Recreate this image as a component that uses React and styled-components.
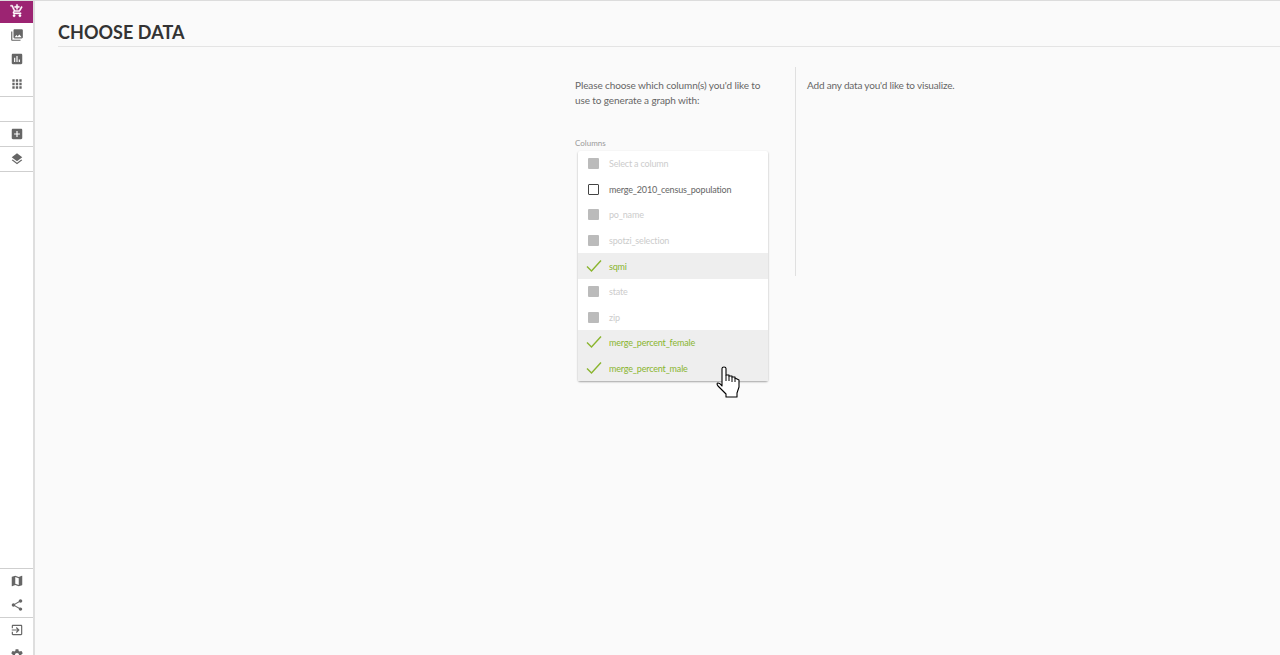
import React from 'react';
import styled, { createGlobalStyle } from 'styled-components';

const Global = createGlobalStyle`
  html, body { margin: 0; padding: 0; height: 100%; overflow: hidden; background: #fafafa; }
  #root { height: 100%; }
  * { box-sizing: border-box; }
`;
const Page = styled.div`
  display: flex; height: 655px; overflow: hidden; border-top: 1px solid #dcdcdc;
  font-family: Lato, "Open Sans", sans-serif; background: #fafafa;
`;
const Sidebar = styled.nav`
  width: 35px; flex: none; background: #fff; border-right: 2px solid #dedede;
  display: flex; flex-direction: column; justify-content: space-between; margin-top: -1px; height: 656px; overflow: hidden;
`;
const Section = styled.div`
  display: flex; flex-direction: column; border-bottom: ${p => p.$open ? 'none' : '1px solid #cfcfcf'};
  border-top: ${p => p.$top ? '1px solid #cfcfcf' : 'none'};
  height: ${p => p.$h || 'auto'};
`;
const NavItem = styled.div`
  height: ${p => p.$h || 25}px; display: flex; align-items: center; justify-content: center;
  background: ${p => p.$active ? '#9c2472' : 'transparent'};
  color: ${p => p.$active ? '#fff' : '#666'};
  svg { width: 14px; height: 14px; fill: currentColor; display: block; stroke: currentColor; stroke-width: ${p => p.$active ? '.8px' : '0'}; }
`;
const Main = styled.main`flex: 1; min-width: 0; padding-left: 23px;`;
const Header = styled.header`
  height: 46px; border-bottom: 1px solid #e4e4e4; padding-top: 19px;
`;
const Title = styled.h1`
  margin: 0; font-size: 18px; line-height: 24px; font-weight: 700; color: #333; letter-spacing: .05px;
`;
const Columns = styled.div`
  display: flex; padding: 20px 0 0 517px; align-items: flex-start;
`;
const Left = styled.section`
  width: 221px; height: 209px; border-right: 1px solid #e0e0e0; position: relative;
`;
const Intro = styled.p`
  margin: 11px 0 0; width: 200px; font-size: 10px; letter-spacing: -.1px; line-height: 15px; color: #666;
`;
const Right = styled.p`
  margin: 11px 0 0 11px; font-size: 10px; letter-spacing: -.18px; line-height: 15px; color: #666;
`;
const FieldLabel = styled.label`
  display: block; margin-top: 29px; font-size: 8px; line-height: 12px; color: #999;
`;
const Menu = styled.ul`
  position: absolute; top: 84px; left: 3px; width: 190px; margin: 0; padding: 0; list-style: none;
  background: #fff; border-radius: 2px; box-shadow: 0 1px 2px rgba(0,0,0,.35); z-index: 2;
`;
const Option = styled.li`
  height: 25.6px; display: flex; align-items: center; padding-left: 10px; font-size: 9px; letter-spacing: -.17px;
  background: ${p => p.$state === 'on' ? '#eeeeee' : 'transparent'};
  color: ${p => ({ on: '#8ab52e', off: '#ccc', open: '#666' }[p.$state])};
`;
const Mark = styled.span`
  width: 11px; height: 11px; margin-right: 10px; flex: none; display: block;
  background: ${p => p.$state === 'off' ? '#bbb' : 'transparent'};
  border: ${p => p.$state === 'open' ? '1.5px solid #444' : 'none'};
  border-radius: 1px;
  svg { display: block; width: 16px; height: 14px; margin: -2px 0 0 -2px; overflow: visible; }
`;
const Cursor = styled.svg`
  position: absolute; left: 716px; top: 366px; width: 25px; height: 32px; z-index: 5;
`;

const cart = "M11 9h2V6h3V4h-3V1h-2v3H8v2h3v3zm-4 9c-1.1 0-1.99.9-1.99 2S5.9 22 7 22s2-.9 2-2-.9-2-2-2zm10 0c-1.1 0-1.99.9-1.99 2s.89 2 1.99 2 2-.9 2-2-.9-2-2-2zm-9.83-3.25l.03-.12.9-1.63h7.45c.75 0 1.41-.41 1.75-1.03l3.86-7.01L19.42 4h-.01l-1.1 2-2.76 5H8.53l-.13-.27L6.16 6l-.95-2-.94-2H1v2h2l3.6 7.59-1.35 2.45c-.16.28-.25.61-.25.96 0 1.1.9 2 2 2h12v-2H7.42c-.13 0-.25-.11-.25-.25z";
const library = "M22 16V4c0-1.1-.9-2-2-2H8c-1.1 0-2 .9-2 2v12c0 1.1.9 2 2 2h12c1.1 0 2-.9 2-2zm-11-4l2.03 2.71L16 11l4 5H8l3-4zM2 6v14c0 1.1.9 2 2 2h14v-2H4V6H2z";
const chart = "M19 3H5c-1.1 0-2 .9-2 2v14c0 1.1.9 2 2 2h14c1.1 0 2-.9 2-2V5c0-1.1-.9-2-2-2zM9 17H7v-7h2v7zm4 0h-2V7h2v10zm4 0h-2v-4h2v4z";
const apps = "M4 8h4V4H4v4zm6 12h4v-4h-4v4zm-6 0h4v-4H4v4zm0-6h4v-4H4v4zm6 0h4v-4h-4v4zm6-10v4h4V4h-4zm-6 4h4V4h-4v4zm6 6h4v-4h-4v4zm0 6h4v-4h-4v4z";
const add = "M19 3H5c-1.11 0-2 .9-2 2v14c0 1.1.89 2 2 2h14c1.1 0 2-.9 2-2V5c0-1.1-.9-2-2-2zm-2 10h-4v4h-2v-4H7v-2h4V7h2v4h4v2z";
const layers = "M11.99 18.54l-7.37-5.73L3 14.07l9 7 9-7-1.63-1.27-7.38 5.74zM12 16l7.36-5.73L21 9l-9-7-9 7 1.63 1.27L12 16z";
const map = "M20.5 3l-.16.03L15 5.1 9 3 3.36 4.9c-.21.07-.36.25-.36.48V20.5c0 .28.22.5.5.5l.16-.03L9 18.9l6 2.1 5.64-1.9c.21-.07.36-.25.36-.48V3.5c0-.28-.22-.5-.5-.5zM15 19l-6-2.11V5l6 2.11V19z";
const share = "M18 16.08c-.76 0-1.44.3-1.96.77L8.91 12.7c.05-.23.09-.46.09-.7s-.04-.47-.09-.7l7.05-4.11c.54.5 1.25.81 2.04.81 1.66 0 3-1.34 3-3s-1.34-3-3-3-3 1.34-3 3c0 .24.04.47.09.7L8.04 9.81C7.5 9.31 6.79 9 6 9c-1.66 0-3 1.34-3 3s1.34 3 3 3c.79 0 1.5-.31 2.04-.81l7.12 4.16c-.05.21-.08.43-.08.65 0 1.61 1.31 2.92 2.92 2.92s2.92-1.31 2.92-2.92-1.31-2.92-2.92-2.92z";
const exit = "M10.09 15.59L11.5 17l5-5-5-5-1.41 1.41L12.67 11H3v2h9.67l-2.58 2.59zM19 3H5c-1.11 0-2 .9-2 2v4h2V5h14v14H5v-4H3v4c0 1.1.89 2 2 2h14c1.1 0 2-.9 2-2V5c0-1.1-.9-2-2-2z";
const gear = "M19.43 12.98c.04-.32.07-.64.07-.98s-.03-.66-.07-.98l2.11-1.65c.19-.15.24-.42.12-.64l-2-3.46c-.12-.22-.39-.3-.61-.22l-2.49 1c-.52-.4-1.08-.73-1.69-.98l-.38-2.65C14.46 2.18 14.25 2 14 2h-4c-.25 0-.46.18-.49.42l-.38 2.65c-.61.25-1.17.59-1.69.98l-2.49-1c-.23-.09-.49 0-.61.22l-2 3.46c-.13.22-.07.49.12.64l2.11 1.65c-.04.32-.07.65-.07.98s.03.66.07.98l-2.11 1.65c-.19.15-.24.42-.12.64l2 3.46c.12.22.39.3.61.22l2.49-1c.52.4 1.08.73 1.69.98l.38 2.65c.03.24.24.42.49.42h4c.25 0 .46-.18.49-.42l.38-2.65c.61-.25 1.17-.59 1.69-.98l2.49 1c.23.09.49 0 .61-.22l2-3.46c.12-.22.07-.49-.12-.64l-2.11-1.65zM12 15.5c-1.93 0-3.5-1.57-3.5-3.5s1.57-3.5 3.5-3.5 3.5 1.57 3.5 3.5-1.57 3.5-3.5 3.5z";

const Icon = ({ d }) => <svg viewBox="0 0 24 24"><path d={d} /></svg>;
const options = [
  ['Select a column', 'off'], ['merge_2010_census_population', 'open'], ['po_name', 'off'],
  ['spotzi_selection', 'off'], ['sqmi', 'on'], ['state', 'off'], ['zip', 'off'],
  ['merge_percent_female', 'on'], ['merge_percent_male', 'on'],
];

export default function App() {
  return (
    <Page>
      <Global />
      <Sidebar>
        <div>
          <Section $h="97px">
            <NavItem $active $h={23}><Icon d={cart} /></NavItem>
            <NavItem><Icon d={library} /></NavItem>
            <NavItem><Icon d={chart} /></NavItem>
            <NavItem><Icon d={apps} /></NavItem>
          </Section>
          <Section $h="25px" />
          <Section $h="25px"><NavItem $h={23}><Icon d={add} /></NavItem></Section>
          <Section $h="25px"><NavItem $h={24}><Icon d={layers} /></NavItem></Section>
        </div>
        <div style={{ height: 88 }}>
          <Section $top $h="50px">
            <NavItem $h={24}><Icon d={map} /></NavItem>
            <NavItem $h={24}><Icon d={share} /></NavItem>
          </Section>
          <Section $open>
            <NavItem $h={24}><Icon d={exit} /></NavItem>
            <NavItem $h={25}><Icon d={gear} /></NavItem>
          </Section>
        </div>
      </Sidebar>
      <Main>
        <Header><Title>CHOOSE DATA</Title></Header>
        <Columns>
          <Left>
            <Intro>Please choose which column(s) you'd like to use to generate a graph with:</Intro>
            <FieldLabel>Columns</FieldLabel>
            <Menu>
              {options.map(([t, s]) => (
                <Option key={t} $state={s}>
                  <Mark $state={s}>
                    {s === 'on' && <svg viewBox="0 0 16 14"><path d="M1 7.5 5.5 12 15 1.5" fill="none" stroke="#8ab52e" strokeWidth="1.4" /></svg>}
                  </Mark>
                  {t}
                </Option>
              ))}
            </Menu>
          </Left>
          <Right>Add any data you'd like to visualize.</Right>
        </Columns>
      </Main>
      <Cursor viewBox="0 0 25 32">
        <path d="M6 2.500C6 1.500 7 1 8 1c1 0 2 .5 2 1.500V9h3v1h3v1h3v1l4 2v7l-2 6v4H10v-3L2 20c-1.500-2-1-3 0-3 1.500 0 3 1.500 4 3z" fill="#fff" stroke="#000" strokeWidth="1.100" strokeLinejoin="round" />
        <path d="M10 9v6M13 10v5M16 11v5M19 12v4" stroke="#000" strokeWidth="1" fill="none" />
      </Cursor>
    </Page>
  );
}
